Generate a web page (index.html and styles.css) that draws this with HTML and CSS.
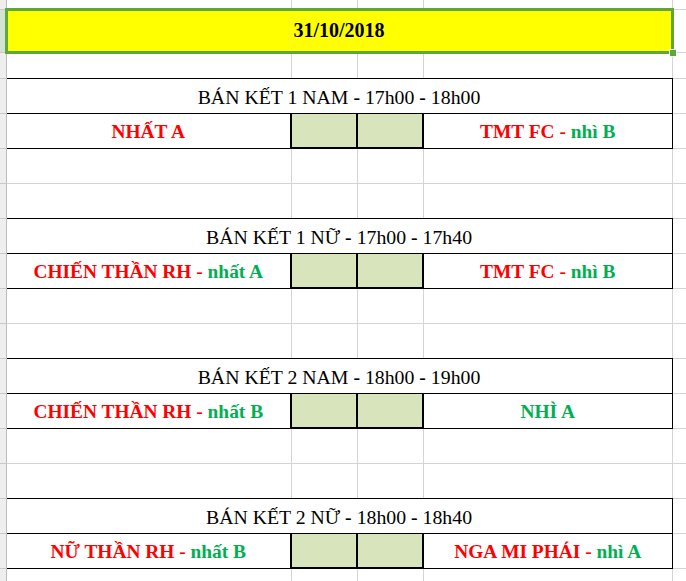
FILE: index.html
```html
<!DOCTYPE html>
<html lang="vi">
<head>
<meta charset="utf-8">
<title>Lịch thi đấu 31/10/2018</title>
<link rel="stylesheet" href="styles.css">
</head>
<body>
<table class="sheet">
  <colgroup>
    <col class="c-h"><col class="c-a"><col class="c-b"><col class="c-c"><col class="c-d"><col class="c-e">
  </colgroup>
  <tbody>
    <tr class="r-top"><th class="rh"></th><td></td><td></td><td></td><td></td><td></td></tr>
    <tr class="r-date"><th class="rh rh-sel"></th><td colspan="4" class="date"><span class="date-text">31/10/2018</span></td><td></td></tr>
    <tr class="r-gap pre"><th class="rh"></th><td></td><td></td><td></td><td></td><td></td></tr>

    <tr class="r"><th class="rh"></th><td colspan="4" class="title">BÁN KẾT 1 NAM <b>-</b> 17h00 <b>-</b> 18h00</td><td></td></tr>
    <tr class="r"><th class="rh"></th><td class="team"><span class="red">NHẤT A</span></td><td class="score"></td><td class="score"></td><td class="team"><span class="red">TMT FC -</span> <span class="green">nhì B</span></td><td></td></tr>
    <tr class="r"><th class="rh"></th><td></td><td></td><td></td><td></td><td></td></tr>
    <tr class="r pre"><th class="rh"></th><td></td><td></td><td></td><td></td><td></td></tr>

    <tr class="r"><th class="rh"></th><td colspan="4" class="title">BÁN KẾT 1 NỮ <b>-</b> 17h00 <b>-</b> 17h40</td><td></td></tr>
    <tr class="r"><th class="rh"></th><td class="team"><span class="red">CHIẾN THẦN RH -</span> <span class="green">nhất A</span></td><td class="score"></td><td class="score"></td><td class="team"><span class="red">TMT FC -</span> <span class="green">nhì B</span></td><td></td></tr>
    <tr class="r"><th class="rh"></th><td></td><td></td><td></td><td></td><td></td></tr>
    <tr class="r pre"><th class="rh"></th><td></td><td></td><td></td><td></td><td></td></tr>

    <tr class="r"><th class="rh"></th><td colspan="4" class="title">BÁN KẾT 2 NAM <b>-</b> 18h00 <b>-</b> 19h00</td><td></td></tr>
    <tr class="r"><th class="rh"></th><td class="team"><span class="red">CHIẾN THẦN RH -</span> <span class="green">nhất B</span></td><td class="score"></td><td class="score"></td><td class="team"><span class="green">NHÌ A</span></td><td></td></tr>
    <tr class="r"><th class="rh"></th><td></td><td></td><td></td><td></td><td></td></tr>
    <tr class="r pre"><th class="rh"></th><td></td><td></td><td></td><td></td><td></td></tr>

    <tr class="r"><th class="rh"></th><td colspan="4" class="title">BÁN KẾT 2 NỮ <b>-</b> 18h00 <b>-</b> 18h40</td><td></td></tr>
    <tr class="r"><th class="rh"></th><td class="team"><span class="red">NỮ THẦN RH -</span> <span class="green">nhất B</span></td><td class="score"></td><td class="score"></td><td class="team"><span class="red">NGA MI PHÁI -</span> <span class="green">nhì A</span></td><td></td></tr>
    <tr class="r"><th class="rh"></th><td></td><td></td><td></td><td></td><td></td></tr>
  </tbody>
</table>
</body>
</html>
```
FILE: styles.css
```css
html, body {
  margin: 0;
  padding: 0;
  background: #ffffff;
}

body {
  width: 686px;
  height: 581px;
  overflow: hidden;
  font-family: "Liberation Serif", "Times New Roman", serif;
  color: #000;
}

.sheet {
  border-collapse: collapse;
  table-layout: fixed;
  width: 686px;
}

.c-h { width: 6px; }
.c-a { width: 285px; }
.c-b { width: 66px; }
.c-c { width: 66px; }
.c-d { width: 249px; }
.c-e { width: 14px; }

.sheet td,
.sheet th {
  border: 1px solid #d4d4d4;
  padding: 0;
}

.sheet .r-top td,
.sheet .r-top th {
  border-top: none;
}

.r-top { height: 9px; }
.r-date { height: 43px; }
.r-gap { height: 26px; }
.r { height: 35px; }

.sheet .rh {
  background: #eeeeee;
  border-left: none;
  border-right: 1px solid #bcbcbc;
  border-bottom: 1px solid #c8c8c8;
}

.sheet .rh-sel {
  background: #d3e2d3;
}

.sheet .pre > td:not(:last-child) {
  border-bottom-color: #000;
}

.sheet .date {
  position: relative;
  background: #ffff00;
  text-align: center;
  vertical-align: middle;
}

.sheet .date::after {
  content: "";
  position: absolute;
  left: -2px;
  top: -2px;
  right: -2px;
  bottom: -2px;
  border: 3px solid #5ea83a;
}

.sheet .date::before {
  content: "";
  position: absolute;
  right: -5px;
  bottom: -5px;
  width: 6px;
  height: 6px;
  background: #5ea83a;
  border: 1px solid #ffffff;
  z-index: 2;
}

.date-text {
  font-weight: bold;
  font-size: 20px;
  line-height: 20px;
}

.sheet .title {
  border: 1px solid #000;
  text-align: center;
  vertical-align: bottom;
  padding-bottom: 6px;
  font-size: 19.8px;
  line-height: 20px;
  white-space: nowrap;
}

.title b {
  font-weight: bold;
}

.sheet .team {
  border: 1px solid #000;
  text-align: center;
  vertical-align: bottom;
  padding-bottom: 6px;
  font-weight: bold;
  font-size: 19.4px;
  line-height: 20px;
  white-space: nowrap;
}

.sheet .score {
  background: #d8e4bc;
  border: 2px solid #000;
  border-top-width: 1px;
}

.red { color: #ff0000; }
.green { color: #00b050; }
```
